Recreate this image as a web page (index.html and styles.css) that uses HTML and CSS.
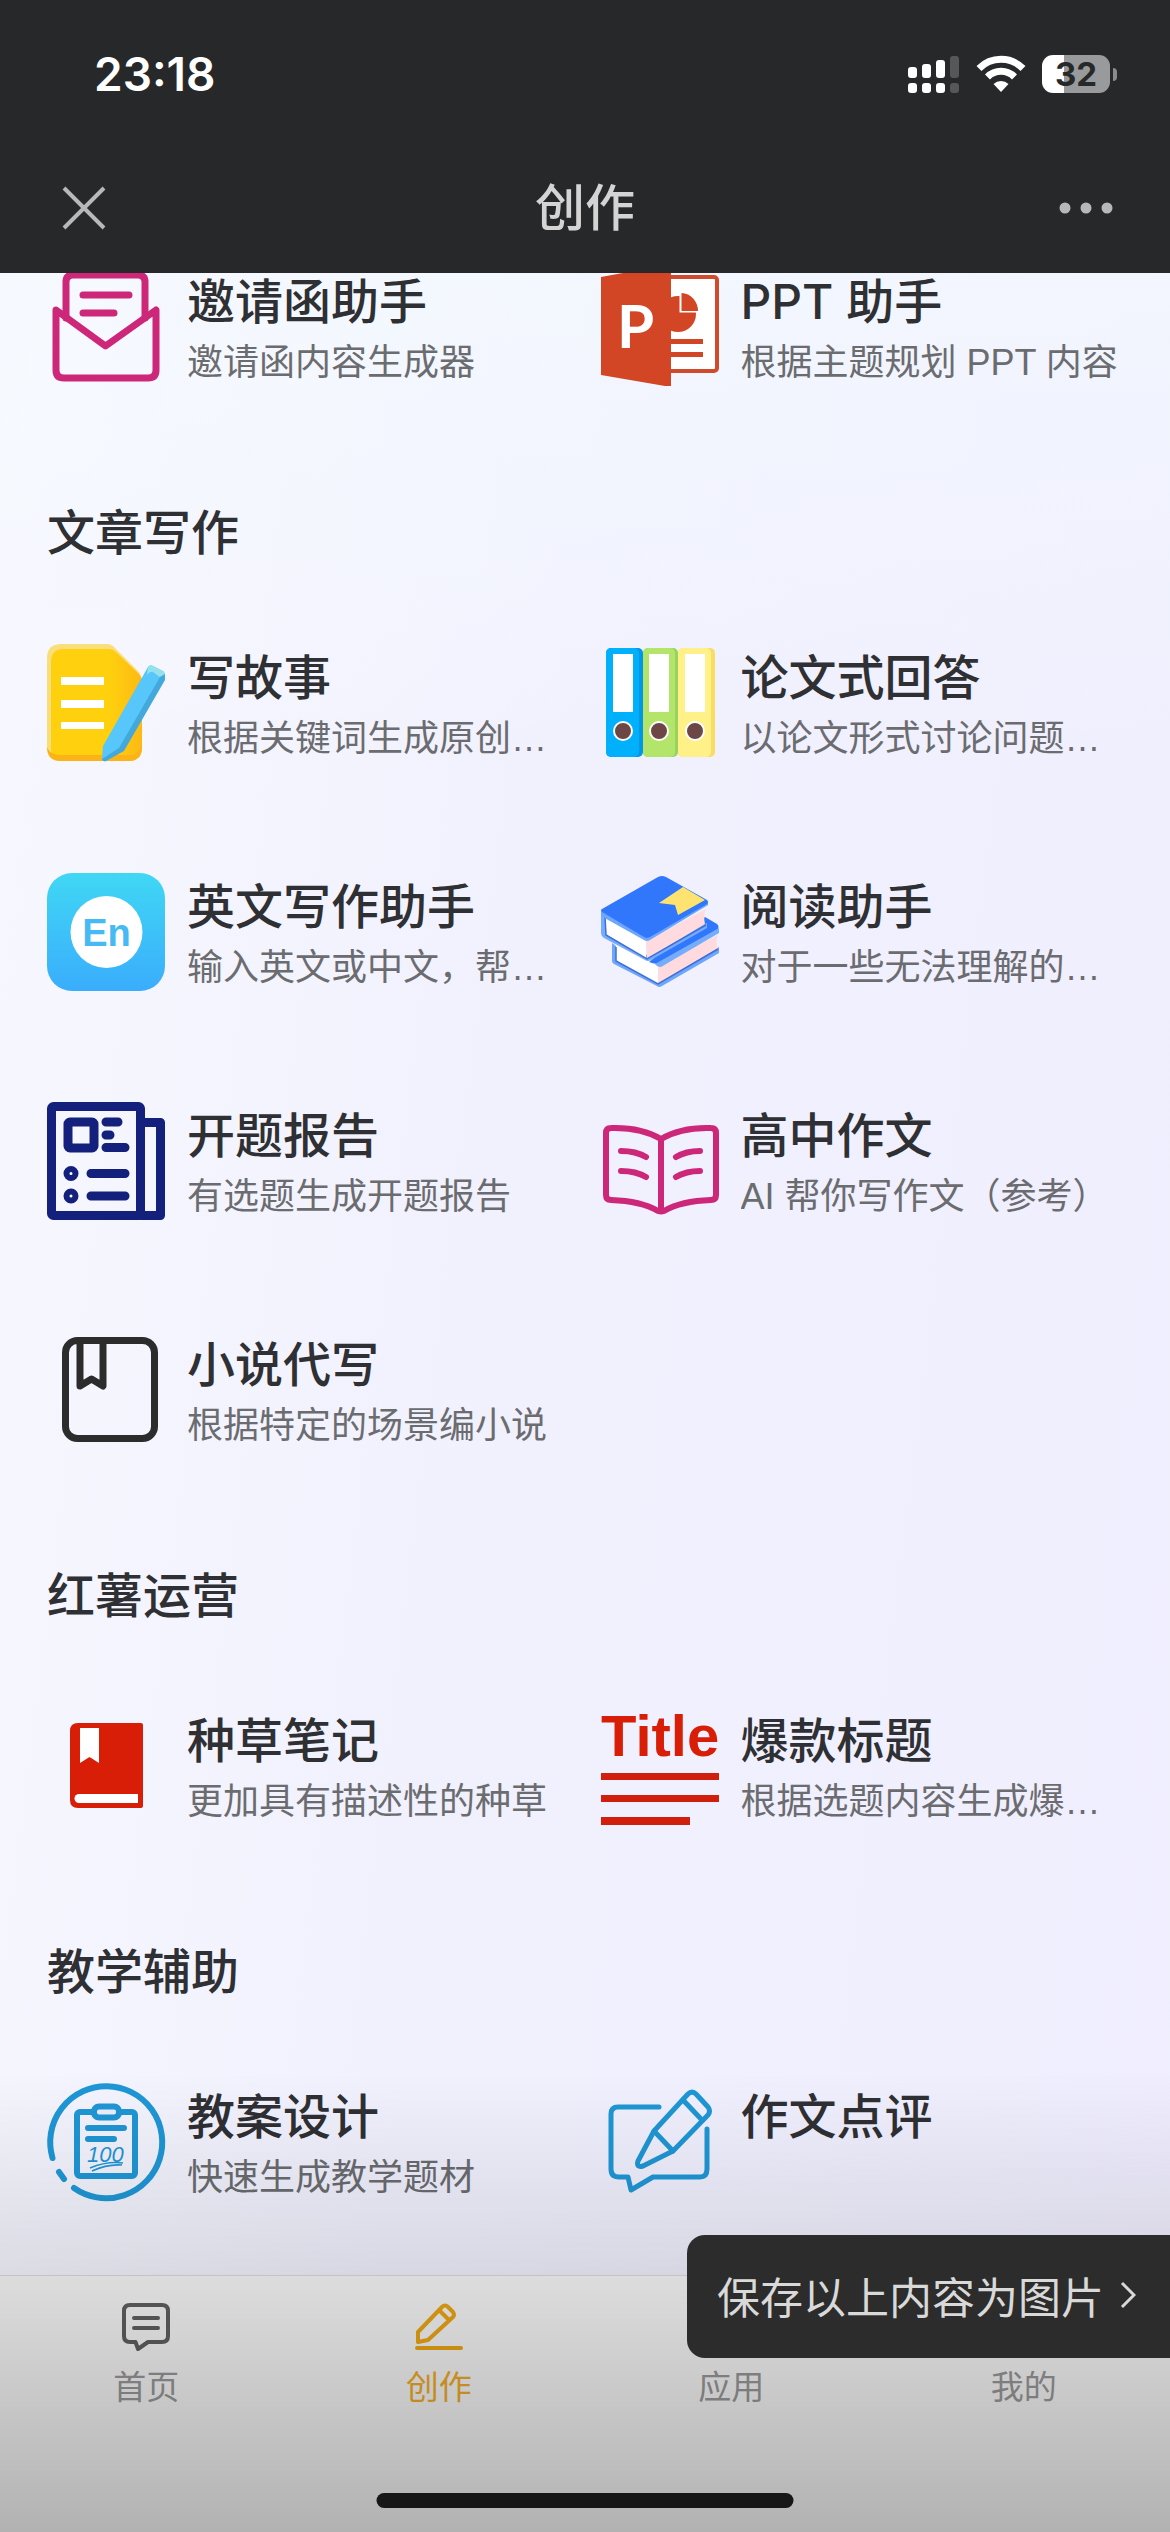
FILE: index.html
```html
<!DOCTYPE html>
<html lang="zh-CN">
<head>
  <meta charset="UTF-8">
  <meta name="viewport" content="width=device-width, initial-scale=1.0">
  <title>创作</title>
  <link rel="stylesheet" href="styles.css">
</head>
<body>
  <!-- Header -->
  <header class="header">
    <div class="status-bar">
      <span class="clock">23:18</span>
      <div class="status-icons">
        <svg class="signal" viewBox="0 0 52 38" width="52" height="38">
          <g fill="#fff">
            <rect x="0" y="12" width="9" height="11" rx="3"/>
            <rect x="14" y="9" width="9" height="14" rx="3"/>
            <rect x="28" y="5" width="9" height="18" rx="3"/>
            <rect x="0" y="28" width="9" height="10" rx="3"/>
            <rect x="14" y="28" width="9" height="10" rx="3"/>
            <rect x="28" y="28" width="9" height="10" rx="3"/>
          </g>
          <g fill="#565759">
            <rect x="42" y="1" width="9" height="22" rx="3"/>
            <rect x="42" y="28" width="9" height="10" rx="3"/>
          </g>
        </svg>
        <svg class="wifi" viewBox="0 0 50 38" width="50" height="38">
          <g fill="none" stroke="#fff" stroke-width="7">
            <path d="M3 13.500 A31 31 0 0 1 47 13.500"/>
            <path d="M11.500 22 A19 19 0 0 1 38.500 22"/>
          </g>
          <path d="M25 37 L17.500 29 A11 11 0 0 1 32.500 29 Z" fill="#fff"/>
        </svg>
        <div class="battery">
          <span class="battery-level">32</span>
          <span class="battery-tip"></span>
        </div>
      </div>
    </div>
    <div class="nav-bar">
      <button class="nav-btn" type="button" aria-label="关闭">
        <svg viewBox="0 0 44 44" width="44" height="44"><path d="M2 2 L42 42 M42 2 L2 42" stroke="#b8b8b9" stroke-width="4" fill="none"/></svg>
      </button>
      <h1 class="nav-title">创作</h1>
      <button class="nav-btn" type="button" aria-label="更多">
        <svg viewBox="0 0 54 12" width="54" height="12"><g fill="#b8b8b9"><circle cx="6" cy="6" r="5.500"/><circle cx="27" cy="6" r="5.500"/><circle cx="48" cy="6" r="5.500"/></g></svg>
      </button>
    </div>
  </header>

  <!-- Main Content -->
  <main class="content">
    <section class="section">
      <div class="grid">
        <a class="item" href="#">
          <svg class="icon" viewBox="0 0 118 118">
            <g fill="none" stroke="#cd2779" stroke-width="7" stroke-linecap="round" stroke-linejoin="round">
              <path d="M19 50 V14 Q19 7 26 7 H91 Q98 7 98 14 V50"/>
              <path d="M9 42 L58.500 78 L109 42 V102 Q109 110 101 110 H17 Q9 110 9 102 Z"/>
              <path d="M36 27 H82 M36 45 H67"/>
            </g>
          </svg>
          <div class="item-text">
            <h3 class="item-title">邀请函助手</h3>
            <p class="item-desc">邀请函内容生成器</p>
          </div>
        </a>
        <a class="item" href="#">
          <svg class="icon" viewBox="0 0 118 118">
            <rect x="60" y="9" width="56" height="94" rx="3" fill="#fff" stroke="#d04a2c" stroke-width="4"/>
            <circle cx="77" cy="46" r="18" fill="#d24625"/>
            <path d="M78.500 22 H100 V44.500 H78.500 Z" fill="#fff"/>
            <path d="M80.500 25 A17 18 0 0 1 97 43 H80.500 Z" fill="#d24625"/>
            <path d="M70 71 H102 V76 H70 Z M70 84 H102 V89 H70 Z" fill="#d24625"/>
            <path d="M0 9 L60 -2 H70 V118 H64 L0 107 Z" fill="#d24625"/>
            <text x="16" y="80" class="ppt-letter">P</text>
          </svg>
          <div class="item-text">
            <h3 class="item-title">PPT 助手</h3>
            <p class="item-desc">根据主题规划 PPT 内容</p>
          </div>
        </a>
      </div>
    </section>

    <section class="section">
      <h2 class="section-title">文章写作</h2>
      <div class="grid">
        <a class="item" href="#">
          <svg class="icon" viewBox="0 0 118 118">
            <defs>
              <linearGradient id="paperShade" x1="0" y1="0" x2="1" y2="0">
                <stop offset="0.650" stop-color="#ffd00e"/>
                <stop offset="1" stop-color="#fdb913"/>
              </linearGradient>
            </defs>
            <path d="M14 0 H60 Q65 0 69 5 L92 28 Q95 32 95 38 V103 Q95 117 81 117 H14 Q0 117 0 103 V14 Q0 0 14 0 Z" fill="#f9df7c"/>
            <path d="M17 5 H62 Q66 5 69 8 L91 29 Q95 33 95 38 V103 Q95 117 81 117 H14 Q4 117 4 103 V18 Q4 5 17 5 Z" fill="url(#paperShade)"/>
            <path d="M0 103 Q3 111 14 111 H84 Q92 110 95 100 V103 Q95 117 81 117 H14 Q0 117 0 103 Z" fill="#fbb318"/>
            <path d="M14 33 H57 V41 H14 Z M14 56 H57 V64 H14 Z M14 78 H57 V85 H14 Z" fill="#fff"/>
            <path d="M101 23 Q103 20 106 22 L116 27 Q119 29 117 33 L75 107 L59 117 Q55 118 55 114 L56 102 Z" fill="#57c6fa"/>
            <path d="M101 23 Q103 20 106 22 L116 27 Q119 29 117 33 L114 34 L106 28 Q103 27 100 31 Z" fill="#93e1ec"/>
            <path d="M118 30 V36 L77 107 L59 117 Q56 118 55 115 L72 104 L113 33 Z" fill="#43a9dc"/>
          </svg>
          <div class="item-text">
            <h3 class="item-title">写故事</h3>
            <p class="item-desc">根据关键词生成原创…</p>
          </div>
        </a>
        <a class="item" href="#">
          <svg class="icon" viewBox="0 0 118 118">
            <rect x="5" y="4" width="37" height="109" rx="5" fill="#0097e4"/>
            <rect x="5" y="4" width="33" height="109" rx="5" fill="#00b0fb"/>
            <rect x="42" y="4" width="35" height="109" rx="5" fill="#98d35c"/>
            <rect x="42" y="4" width="32" height="109" rx="5" fill="#b3e56a"/>
            <rect x="77" y="4" width="37" height="109" rx="5" fill="#f9dd62"/>
            <rect x="77" y="4" width="33" height="109" rx="5" fill="#fff087"/>
            <path d="M12 10 H32 V68 H12 Z M48 10 H68 V68 H48 Z M84 10 H104 V68 H84 Z" fill="#fff"/>
            <g fill="#6d4646" stroke="#fff" stroke-width="2">
              <circle cx="22" cy="87" r="9"/>
              <circle cx="58" cy="87" r="9"/>
              <circle cx="94" cy="87" r="9"/>
            </g>
          </svg>
          <div class="item-text">
            <h3 class="item-title">论文式回答</h3>
            <p class="item-desc">以论文形式讨论问题…</p>
          </div>
        </a>
        <a class="item" href="#">
          <svg class="icon" viewBox="0 0 118 118">
            <defs>
              <linearGradient id="enBg" x1="0" y1="0" x2="0" y2="1">
                <stop offset="0" stop-color="#40d7f4"/>
                <stop offset="1" stop-color="#3aadfc"/>
              </linearGradient>
            </defs>
            <rect width="118" height="118" rx="25" fill="url(#enBg)"/>
            <circle cx="59.500" cy="59" r="36" fill="#fff"/>
            <text x="59.500" y="73" class="en-letters">En</text>
          </svg>
          <div class="item-text">
            <h3 class="item-title">英文写作助手</h3>
            <p class="item-desc">输入英文或中文，帮…</p>
          </div>
        </a>
        <a class="item" href="#">
          <svg class="icon" viewBox="0 0 118 118">
            <!-- lower book -->
            <path d="M11 70 V88 Q11 90 13 91 L56 113 Q58 115 61 113 L118 80 V74 L58 106 Z" fill="#6ea6fa"/>
            <path d="M15 72 L57 92 V111 L15 88 Z" fill="#fff"/>
            <path d="M57 92 L117 62 Q114 69 117 75 L57 111 Z" fill="#ffdbdf"/>
            <path d="M15 74 V88 L57 111 L117 76" fill="none" stroke="#3f6fd8" stroke-width="1.500"/>
            <path d="M48 89 L104 44 L116 51 Q119 54 116 57 L60 90 Q54 92 48 89 Z" fill="#3077fb"/>
            <path d="M54 91 L118 55 V60 L60 94 Q56 94 54 91 Z" fill="#76adfb"/>
            <!-- upper book -->
            <path d="M0 38 V60 Q0 63 3 65 L44 87 Q47 89 50 87 L106 55 V50 L47 83 Z" fill="#76adfb"/>
            <path d="M4 44 L45 68 V86 L5 62 Z" fill="#fff"/>
            <path d="M45 68 L105 36 Q102 43 104 51 L46 86 Z" fill="#ffdbdf"/>
            <path d="M4 43 L5 62 L46 86 L105 52" fill="none" stroke="#3f6fd8" stroke-width="1.500"/>
            <path d="M0 38 L46 65 L107 29 V32 L49 67 Q46 69 43 67 L0 43 Z" fill="#6ea6fa"/>
            <path d="M1 36 L57 4 Q61 2 65 4 L106 27 Q108 29 106 31 L49 64 Q46 66 43 64 L1 39 Q-1 37 1 36 Z" fill="#3077fb"/>
            <path d="M82 14 L104 27 L77 42 L74 32 L58 30 Z" fill="#ffe371"/>
          </svg>
          <div class="item-text">
            <h3 class="item-title">阅读助手</h3>
            <p class="item-desc">对于一些无法理解的…</p>
          </div>
        </a>
        <a class="item" href="#">
          <svg class="icon" viewBox="0 0 118 118">
            <g fill="none" stroke="#13217c" stroke-width="9" stroke-linecap="round" stroke-linejoin="round">
              <rect x="4.500" y="4.500" width="89" height="109" rx="2"/>
              <path d="M94 20.500 H113.500 V113.500 H94"/>
              <rect x="21" y="20" width="26" height="26" rx="2"/>
              <path d="M59 20 H71 M59 33 H63 M59 45.500 H78"/>
              <path d="M44 71.500 H78 M44 94 H78"/>
            </g>
            <g fill="#fff" stroke="#13217c" stroke-width="6">
              <circle cx="24" cy="71.500" r="4.500"/>
              <circle cx="24" cy="94" r="4.500"/>
            </g>
          </svg>
          <div class="item-text">
            <h3 class="item-title">开题报告</h3>
            <p class="item-desc">有选题生成开题报告</p>
          </div>
        </a>
        <a class="item" href="#">
          <svg class="icon" viewBox="0 0 118 118">
            <g fill="none" stroke="#cd2779" stroke-width="6" stroke-linecap="round" stroke-linejoin="round">
              <path d="M60 37 Q40 25 10 26 Q5 26 5 31 V93 Q5 98 10 98 Q40 99 57 109 Q60 110 63 109 Q80 99 110 98 Q115 98 115 93 V31 Q115 26 110 26 Q80 25 60 37 V109"/>
              <path d="M20 49 Q35 49 45 55 M20 69 Q35 69 45 75"/>
              <path d="M99 49 Q85 49 75 55 M99 69 Q85 69 75 75"/>
            </g>
          </svg>
          <div class="item-text">
            <h3 class="item-title">高中作文</h3>
            <p class="item-desc">AI 帮你写作文（参考）</p>
          </div>
        </a>
        <a class="item" href="#">
          <svg class="icon" viewBox="0 0 118 118">
            <g fill="none" stroke="#2c2c2c" stroke-width="7" stroke-linejoin="round">
              <rect x="18.500" y="9.500" width="89" height="98" rx="12"/>
              <path d="M33 10 V55 L44.500 48 L56 55 V10"/>
            </g>
          </svg>
          <div class="item-text">
            <h3 class="item-title">小说代写</h3>
            <p class="item-desc">根据特定的场景编小说</p>
          </div>
        </a>
      </div>
    </section>

    <section class="section">
      <h2 class="section-title">红薯运营</h2>
      <div class="grid">
        <a class="item" href="#">
          <svg class="icon" viewBox="0 0 118 118">
            <path d="M31 16 H94 Q96 16 96 18 V99 Q96 101 94 101 H31 Q23 101 23 93 V24 Q23 16 31 16 Z" fill="#d81e06"/>
            <path d="M33 21 H52 V56 L42.500 50 L33 56 Z" fill="#fff"/>
            <path d="M91 87 H32 A4.500 4.500 0 0 0 32 96 H91 Z" fill="#fff"/>
          </svg>
          <div class="item-text">
            <h3 class="item-title">种草笔记</h3>
            <p class="item-desc">更加具有描述性的种草</p>
          </div>
        </a>
        <a class="item" href="#">
          <svg class="icon" viewBox="0 0 118 118">
            <text x="0" y="49" class="title-letters">Title</text>
            <path d="M0 66 H118 V73 H0 Z M0 88 H118 V95 H0 Z M0 110 H89 V118 H0 Z" fill="#d01f0c"/>
          </svg>
          <div class="item-text">
            <h3 class="item-title">爆款标题</h3>
            <p class="item-desc">根据选题内容生成爆…</p>
          </div>
        </a>
      </div>
    </section>

    <section class="section">
      <h2 class="section-title">教学辅助</h2>
      <div class="grid">
        <a class="item" href="#">
          <svg class="icon" viewBox="0 0 118 118">
            <g fill="none" stroke="#1f97d6" stroke-width="6" stroke-linecap="round" stroke-linejoin="round">
              <path d="M5.500 75 A56 56 0 1 1 27 105"/>
              <path d="M12 89 L17 96"/>
              <rect x="30" y="29" width="58" height="64" rx="3"/>
              <path d="M41 45 H77 M41 56 H67"/>
              <rect x="47" y="23.500" width="25" height="11" rx="5" fill="#efeefd"/>
            </g>
            <text x="40" y="79" class="score-letters">100</text>
            <path d="M43 85 Q60 78 76 80 M45 88 Q60 81 75 82" fill="none" stroke="#1f97d6" stroke-width="1.500"/>
          </svg>
          <div class="item-text">
            <h3 class="item-title">教案设计</h3>
            <p class="item-desc">快速生成教学题材</p>
          </div>
        </a>
        <a class="item" href="#">
          <svg class="icon" viewBox="0 0 118 118">
            <g fill="none" stroke="#1f97d6" stroke-width="5" stroke-linecap="round" stroke-linejoin="round">
              <path d="M58 24 H17 Q10 24 10 31 V86 Q10 94 18 94 H27 L30 107 L52 94 H99 Q106 94 106 86 V46"/>
              <path d="M53 48 L87 11 Q91 7 95 11 L107 24 Q110 28 107 32 L72 68 L42 83 Q35 85 37 78 Z"/>
              <path d="M53 48 L72 68 M82 17 L101 37"/>
            </g>
          </svg>
          <div class="item-text">
            <h3 class="item-title">作文点评</h3>
            <p class="item-desc"></p>
          </div>
        </a>
      </div>
    </section>
  </main>

  <!-- Tab Bar -->
  <nav class="tab-bar">
    <a class="tab" href="#">
      <svg class="tab-icon" viewBox="0 0 48 48">
        <path d="M8 2 H40 Q46 2 46 8 V33 Q46 39 40 39 H26 L16 46 L13.500 39 H8 Q2 39 2 33 V8 Q2 2 8 2 Z M12 15 H36 M12 25 H36"/>
      </svg>
      <span>首页</span>
    </a>
    <a class="tab active" href="#">
      <svg class="tab-icon" viewBox="0 0 48 48">
        <path d="M2 45 H46 M27 4 Q30 1 33 4 L38 9 Q40 12 38 14 L13 37 L3 39 L3 29 Z M24 7 L34 17"/>
      </svg>
      <span>创作</span>
    </a>
    <a class="tab" href="#">
      <svg class="tab-icon" viewBox="0 0 48 48">
        <path d="M4 4 H20 V20 H4 Z M28 4 H44 V20 H28 Z M4 28 H20 V44 H4 Z M28 28 H44 V44 H28 Z"/>
      </svg>
      <span>应用</span>
    </a>
    <a class="tab" href="#">
      <svg class="tab-icon" viewBox="0 0 48 48">
        <path d="M24 4 A10 10 0 0 1 24 24 A10 10 0 0 1 24 4 Z M6 44 Q8 28 24 28 Q40 28 42 44 Z"/>
      </svg>
      <span>我的</span>
    </a>
  </nav>

  <!-- Shade over the bottom of the screen -->
  <div class="bottom-shade"></div>
  <div class="home-indicator"></div>

  <button class="save-tip" type="button">
    <span>保存以上内容为图片</span>
    <svg viewBox="0 0 16 28" width="16" height="28"><path d="M2 2 L14 14 L2 26" fill="none" stroke="#d9d9d9" stroke-width="3"/></svg>
  </button>
</body>
</html>
```

FILE: styles.css
```css
/* Global Styles */
* {
  box-sizing: border-box;
}

body {
  margin: 0;
  min-height: 100vh;
  font-family: Inter, "Noto Sans CJK SC", sans-serif;
  color: #2f3033;
  background:
    linear-gradient(180deg, rgba(244, 252, 255, 0.8) 0%, rgba(244, 252, 255, 0) 30%),
    linear-gradient(97deg, #f8f8ff 0%, #f1f1fe 45%, #f0eefe 100%);
}

a {
  color: inherit;
  text-decoration: none;
}

button {
  font-family: inherit;
  border: none;
  background: transparent;
  padding: 0;
  cursor: pointer;
}

h1, h2, h3, p {
  margin: 0;
}

svg {
  display: block;
}

/* Header */
.header {
  position: fixed;
  top: 0;
  left: 0;
  right: 0;
  z-index: 10;
  background-color: #27282a;
}

.status-bar {
  height: 142px;
  padding: 6px 53px 0 94px;
  display: flex;
  align-items: center;
  justify-content: space-between;
}

.clock {
  font-size: 46px;
  font-weight: 600;
  color: #fff;
}

.status-icons {
  display: flex;
  align-items: center;
  gap: 16px;
}

.battery {
  display: flex;
  align-items: center;
  gap: 3px;
}

.battery-level {
  width: 68px;
  height: 38px;
  line-height: 38px;
  border-radius: 11px;
  text-align: center;
  font-size: 33px;
  font-weight: 700;
  color: #27282a;
  background: linear-gradient(90deg, #fff 32%, #999a9b 32%);
}

.battery-tip {
  width: 4px;
  height: 13px;
  border-radius: 0 6px 6px 0;
  background-color: #8a8b8c;
}

.nav-bar {
  height: 131px;
  padding: 0 56px;
  display: flex;
  align-items: center;
  justify-content: space-between;
}

.nav-btn {
  width: 56px;
  display: flex;
  justify-content: center;
}

.nav-title {
  font-size: 50px;
  font-weight: 500;
  line-height: 72px;
  color: #d4d4d4;
}

/* Main Content */
.content {
  padding: 212px 16px 257px 47px;
}

.section-title {
  padding: 58px 0 21px;
  font-size: 48px;
  font-weight: 500;
  line-height: 68px;
}

.grid {
  display: grid;
  grid-template-columns: 1fr 1fr;
}

.item {
  display: flex;
  align-items: center;
  gap: 22px;
  padding: 52px 30px 51px 0;
  min-width: 0;
}

.icon {
  width: 118px;
  height: 118px;
  flex-shrink: 0;
  overflow: visible;
}

.item-text {
  min-width: 0;
  padding-top: 4px;
}

.item-title {
  font-size: 48px;
  font-weight: 500;
  line-height: 68px;
}

.item-desc {
  min-height: 54px;
  font-family: "Liberation Sans", "Noto Sans CJK SC", sans-serif;
  font-size: 36px;
  line-height: 54px;
  color: #6b6c70;
  white-space: nowrap;
  overflow: hidden;
  text-overflow: ellipsis;
}

/* Letters inside the icons */
.ppt-letter {
  font: 700 60px Lato, sans-serif;
  fill: #fff;
}

.en-letters {
  font: 700 38px "Liberation Sans", sans-serif;
  fill: #47b9f3;
  text-anchor: middle;
}

.title-letters {
  font: 700 58px "Liberation Sans", sans-serif;
  fill: #d81e06;
}

.score-letters {
  font: italic 400 22px "Liberation Sans", sans-serif;
  fill: #1f97d6;
}

/* Tab Bar */
.tab-bar {
  position: fixed;
  left: 0;
  right: 0;
  bottom: 0;
  height: 257px;
  padding-top: 27px;
  display: flex;
  background-color: #f7f7f7;
  border-top: 1px solid #dcdcdc;
}

.tab {
  flex: 1;
  display: flex;
  flex-direction: column;
  align-items: center;
  gap: 14px;
  font-size: 33px;
  line-height: 44px;
  color: #999;
}

.tab-icon {
  width: 48px;
  height: 48px;
  fill: none;
  stroke: #606060;
  stroke-width: 4;
  stroke-linecap: round;
  stroke-linejoin: round;
}

.tab.active {
  color: #f0ac2a;
}

.tab.active .tab-icon {
  stroke: #eea714;
}

.bottom-shade {
  position: fixed;
  left: 0;
  right: 0;
  bottom: 0;
  height: 460px;
  pointer-events: none;
  background: linear-gradient(180deg, rgba(0, 0, 0, 0) 0%, rgba(0, 0, 0, 0.1) 43%, rgba(0, 0, 0, 0.28) 100%);
}

.home-indicator {
  position: fixed;
  bottom: 24px;
  left: 50%;
  width: 417px;
  height: 15px;
  transform: translateX(-50%);
  border-radius: 8px;
  background-color: #171717;
}

/* Save tip */
.save-tip {
  position: fixed;
  right: 0;
  bottom: 174px;
  height: 123px;
  padding: 0 34px 4px 30px;
  display: flex;
  align-items: center;
  gap: 16px;
  border-radius: 18px 0 0 18px;
  background-color: #2c2c2c;
  color: #d9d9d9;
  font-size: 43px;
}
```
